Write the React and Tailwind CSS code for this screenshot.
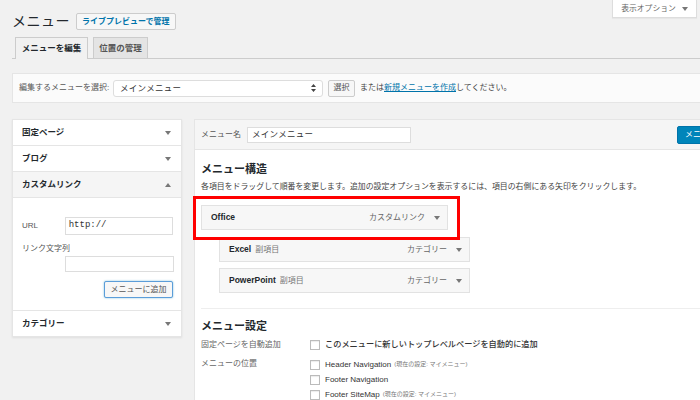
import React from 'react';

const FONT = { fontFamily: '"Liberation Sans", "Noto Sans CJK JP", sans-serif' };

function Tri({ up = false, className = '' }) {
  return (
    <svg width="6" height="4" viewBox="0 0 6 4" className={className}>
      {up ? <path d="M0 4 L3 0 L6 4 Z" fill="#777" /> : <path d="M0 0 L6 0 L3 4 Z" fill="#777" />}
    </svg>
  );
}

function SideRow({ label, up, gray }) {
  return (
    <div className={`h-[25px] flex items-center justify-between pl-[9px] pr-[10px] ${gray ? 'bg-[#f5f5f5]' : 'bg-white'}`}>
      <span className="text-[8.5px] font-bold text-[#23282d]">{label}</span>
      <Tri up={up} />
    </div>
  );
}

function MenuItem({ name, sub, type, className = '' }) {
  return (
    <div className={`h-[25px] flex items-center justify-between pl-[9px] pr-[7px] bg-[#f7f7f7] border border-[#e2e2e2] ${className}`}>
      <div className="flex items-center gap-[4px]">
        <span className="text-[8.5px] font-bold text-[#23282d]">{name}</span>
        {sub && <span className="text-[8px] text-[#777]">{sub}</span>}
      </div>
      <div className="flex items-center gap-[9px]">
        <span className="text-[8px] text-[#666]">{type}</span>
        <Tri />
      </div>
    </div>
  );
}

function Check() {
  return <span className="w-[10px] h-[10px] border border-[#bbb] bg-white shrink-0 shadow-[inset_0_1px_1px_rgba(0,0,0,0.08)]" />;
}

export default function App() {
  return (
    <div className="w-[700px] h-[400px] overflow-hidden bg-[#f1f1f1] relative" style={FONT}>
      <div className="absolute top-0 left-[612px] w-[85px] h-[18px] bg-white border border-t-0 border-[#ddd] flex items-center justify-center gap-[6px] shadow-[0_1px_1px_rgba(0,0,0,0.04)]">
        <span className="text-[7.8px] text-[#666]">表示オプション</span>
        <Tri />
      </div>

      <div className="pl-[12px] pt-[12px]">
        <div className="flex items-center h-[19px]">
          <h1 className="text-[14px] leading-[19px] text-[#23282d] tracking-[0.5px]">メニュー</h1>
          <button className="ml-[6px] h-[17px] px-[5px] border border-[#ccc] bg-[#f7f7f7] rounded-[2px] text-[8px] font-bold text-[#0073aa] leading-none">
            ライブプレビューで管理
          </button>
        </div>

        <div className="mt-[6px] h-[22px] flex items-end gap-[5px] pl-[3px] border-b border-[#ccc]">
          <div className="h-[22px] w-[73px] border border-[#ccc] border-b-0 bg-[#f1f1f1] -mb-px flex items-center justify-center text-[8.5px] font-bold text-[#23282d]">
            メニューを編集
          </div>
          <div className="h-[21px] w-[55px] border border-[#ccc] border-b-0 bg-[#e4e4e4] flex items-center justify-center text-[8.5px] font-bold text-[#555]">
            位置の管理
          </div>
        </div>

        <div className="mt-[14px] h-[30px] w-[720px] bg-[#fbfbfb] border border-[#e5e5e5] flex items-center pl-[6px]">
          <span className="text-[8px] text-[#555] w-[94px] shrink-0">編集するメニューを選択:</span>
          <div className="h-[17px] w-[210px] shrink-0 bg-white border border-[#ddd] rounded-[3px] flex items-center justify-between pl-[6px] pr-[6px]">
            <span className="text-[8.5px] text-[#333] tracking-[0.3px]">メインメニュー</span>
            <svg width="5" height="8" viewBox="0 0 5 8">
              <path d="M0 3 L2.5 0 L5 3 Z M0 5 L2.5 8 L5 5 Z" fill="#444" />
            </svg>
          </div>
          <button className="ml-[5px] h-[17px] w-[27px] shrink-0 border border-[#ccc] bg-[#f7f7f7] rounded-[2px] text-[8px] text-[#555]">選択</button>
          <span className="ml-[5px] text-[8px] text-[#444]">
            または<span className="text-[#0073aa] underline">新規メニューを作成</span>してください。
          </span>
        </div>

        <div className="mt-[16px] flex items-start">
          <div className="w-[170px] shrink-0 flex flex-col gap-[1px] bg-[#e5e5e5] border border-[#e5e5e5] shadow-[0_1px_2px_rgba(0,0,0,0.08)]">
            <SideRow label="固定ページ" />
            <SideRow label="ブログ" />
            <SideRow label="カスタムリンク" up gray />
            <div className="h-[112px] bg-white pl-[9px] pr-[8px] pt-[19px] flex flex-col">
              <div className="flex items-center">
                <span className="w-[43px] text-[8px] text-[#555]">URL</span>
                <div className="h-[18px] w-[109px] border border-[#ddd] bg-white flex items-center pl-[3px] text-[9px] text-[#333]" style={{ fontFamily: '"Liberation Mono", monospace' }}>
                  http://
                </div>
              </div>
              <span className="mt-[8px] text-[8px] text-[#555] leading-[12px]">リンク文字列</span>
              <div className="mt-[1px] ml-[43px] h-[16px] w-[109px] border border-[#ddd] bg-white" />
              <button className="mt-[9px] self-end h-[17px] w-[69px] border border-[#5b9dd9] bg-[#f7f7f7] rounded-[2px] text-[8px] text-[#555] shadow-[0_0_2px_rgba(30,140,190,0.6)]">
                メニューに追加
              </button>
            </div>
            <SideRow label="カテゴリー" />
          </div>

          <div className="ml-[12px] w-[520px] shrink-0 h-[300px] bg-white border border-[#e5e5e5]">
            <div className="h-[30px] bg-[#f5f5f5] border-b border-[#e5e5e5] flex items-center pl-[6px]">
              <span className="w-[46px] shrink-0 text-[8px] text-[#555]">メニュー名</span>
              <div className="h-[16px] w-[164px] shrink-0 bg-white border border-[#ddd] flex items-center pl-[4px] text-[8.5px] text-[#333] tracking-[0.3px]">
                メインメニュー
              </div>
              <div className="ml-[266px] h-[18px] w-[60px] shrink-0 bg-[#0085ba] border border-[#0073aa] rounded-[2px] flex items-center pl-[7px] text-[8px] text-white whitespace-nowrap overflow-hidden">
                メニューを保存
              </div>
            </div>

            <div className="pl-[6px] flex flex-col">
              <h2 className="mt-[12px] text-[11px] leading-[14px] font-bold text-[#23282d]">メニュー構造</h2>
              <p className="mt-[5px] text-[7.9px] leading-[12px] text-[#444]">
                各項目をドラッグして順番を変更します。追加の設定オプションを表示するには、項目の右側にある矢印をクリックします。
              </p>
              <div className="relative mt-[12px] w-[247px]">
                <MenuItem name="Office" type="カスタムリンク" />
                <div className="absolute left-[-8px] top-[-9px] w-[267px] h-[44px] border-[3px] border-[#ff0000]" />
              </div>
              <MenuItem name="Excel" sub="副項目" type="カテゴリー" className="mt-[7px] ml-[18px] w-[251px]" />
              <MenuItem name="PowerPoint" sub="副項目" type="カテゴリー" className="mt-[6px] ml-[18px] w-[251px]" />
              <div className="mt-[15px] border-t border-[#eee]" />
              <h2 className="mt-[10px] text-[11px] leading-[14px] font-bold text-[#23282d]">メニュー設定</h2>
              <div className="mt-[6px] flex items-center h-[12px]">
                <span className="w-[109px] text-[8px] text-[#666]">固定ページを自動追加</span>
                <Check />
                <span className="ml-[5px] text-[8.2px] font-medium text-[#333]">このメニューに新しいトップレベルページを自動的に追加</span>
              </div>
              <div className="mt-[8px] flex items-start">
                <span className="w-[109px] text-[8px] text-[#666] leading-[12px] mt-[-1px]">メニューの位置</span>
                <div className="flex flex-col gap-[4px]">
                  <div className="flex items-center h-[11px]">
                    <Check />
                    <span className="ml-[5px] text-[8px] text-[#333]">Header Navigation</span>
                    <span className="ml-[3px] text-[6px] text-[#777]">(現在の設定: マイメニュー)</span>
                  </div>
                  <div className="flex items-center h-[11px]">
                    <Check />
                    <span className="ml-[5px] text-[8px] text-[#333]">Footer Navigation</span>
                  </div>
                  <div className="flex items-center h-[11px]">
                    <Check />
                    <span className="ml-[5px] text-[8px] text-[#333]">Footer SiteMap</span>
                    <span className="ml-[3px] text-[6px] text-[#777]">(現在の設定: マイメニュー)</span>
                  </div>
                </div>
              </div>
            </div>
          </div>
        </div>
      </div>
    </div>
  );
}
